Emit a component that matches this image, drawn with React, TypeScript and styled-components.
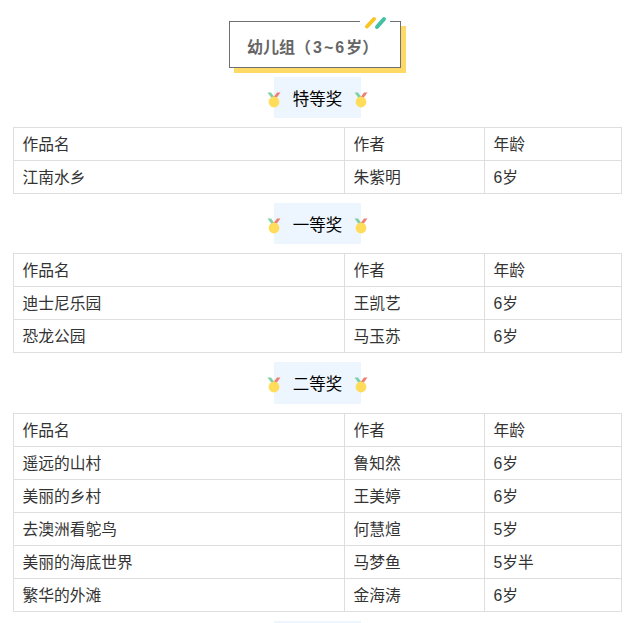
import React from 'react';
import styled, { createGlobalStyle } from 'styled-components';

const GlobalStyle = createGlobalStyle`
  html, body {
    margin: 0;
    padding: 0;
    height: 623px;
    overflow: hidden;
    background: #fff;
    font-family: "Liberation Sans", "Noto Sans CJK SC", sans-serif;
  }
`;

const Page = styled.div`
  width: 630px;
  height: 623px;
  overflow: hidden;
  padding: 21px 8px 0 13px;
  box-sizing: border-box;
  display: flex;
  flex-direction: column;
  align-items: center;
`;

const TitleBox = styled.div`
  position: relative;
  flex: none;
  width: 172px;
  height: 47px;
  box-sizing: border-box;
  border: 1px solid #707070;
  background: #fff;
  box-shadow: 5px 5px 0 #ffd966;
  margin: 0 5px 9px 0;
  padding: 15px 0 0 17px;
  font-size: 16px;
  line-height: 22px;
  font-weight: 700;
  color: #666;
  white-space: nowrap;
`;

const TitleNumber = styled.span`
  margin-left: 2px;
  letter-spacing: 2px;
`;

const TitleMark = styled.svg`
  position: absolute;
  top: -8px;
  right: 10px;
  width: 30px;
  height: 16px;
`;

const Ribbon = styled.div`
  position: relative;
  flex: none;
  width: 87px;
  height: 41.2px;
  margin-bottom: 9px;
  background: #edf6fe;
  display: flex;
  align-items: center;
  justify-content: center;
  font-size: 16.5px;
  color: #000;
`;

const MedalIcon = styled.svg<{ $side: 'left' | 'right' }>`
  position: absolute;
  top: 15px;
  ${p => (p.$side === 'left' ? 'left: -7px;' : 'right: -7px;')}
  width: 14px;
  height: 16px;
`;

const AwardTable = styled.table`
  flex: none;
  width: 608px;
  border-collapse: collapse;
  table-layout: fixed;
  margin-bottom: 9px;
  align-self: flex-start;
  font-size: 15.75px;
  color: #333;
`;

const Cell = styled.td`
  height: 33px;
  padding: 2px 8px 0 8.5px;
  box-sizing: border-box;
  border: 1px solid #dedede;
  line-height: 22px;
`;

type Row = [string, string, string];

const header: Row = ['作品名', '作者', '年龄'];

const sections: { name: string; rows: Row[] }[] = [
  { name: '特等奖', rows: [['江南水乡', '朱紫明', '6岁']] },
  {
    name: '一等奖',
    rows: [
      ['迪士尼乐园', '王凯艺', '6岁'],
      ['恐龙公园', '马玉苏', '6岁'],
    ],
  },
  {
    name: '二等奖',
    rows: [
      ['遥远的山村', '鲁知然', '6岁'],
      ['美丽的乡村', '王美婷', '6岁'],
      ['去澳洲看鸵鸟', '何慧煊', '5岁'],
      ['美丽的海底世界', '马梦鱼', '5岁半'],
      ['繁华的外滩', '金海涛', '6岁'],
    ],
  },
];

const Medal = ({ side }: { side: 'left' | 'right' }) => (
  <MedalIcon $side={side} viewBox="0 0 14 16">
    <path d="M0.5 0.5 L4 0.5 L8.5 6.5 L6 8 Z" fill="#7fd0a8" />
    <path d="M13.5 0.5 L10 0.5 L5.5 6.5 L8 8 Z" fill="#ef7f73" />
    <circle cx="7" cy="10" r="5.4" fill="#ffdc5a" />
  </MedalIcon>
);

const Section = ({ name, rows }: { name: string; rows: Row[] }) => (
  <>
    <Ribbon>
      <Medal side="left" />
      {name}
      <Medal side="right" />
    </Ribbon>
    <AwardTable>
      <colgroup>
        <col style={{ width: 331 }} />
        <col style={{ width: 140 }} />
        <col style={{ width: 137 }} />
      </colgroup>
      <tbody>
        {[header, ...rows].map(row => (
          <tr key={row[0]}>
            {row.map(text => (
              <Cell key={text}>{text}</Cell>
            ))}
          </tr>
        ))}
      </tbody>
    </AwardTable>
  </>
);

export default function App() {
  return (
    <Page>
      <GlobalStyle />
      <TitleBox>
        幼儿组（<TitleNumber>3~6</TitleNumber>岁）
        <TitleMark viewBox="0 0 30 16">
          <rect width="30" height="4" y="6" fill="#fff" />
          <path d="M7 12.5 L14 5" stroke="#f9c623" strokeWidth="4" strokeLinecap="round" />
          <path d="M17 13 L24 5" stroke="#45c0a5" strokeWidth="4" strokeLinecap="round" />
        </TitleMark>
      </TitleBox>
      {sections.map(s => (
        <Section key={s.name} name={s.name} rows={s.rows} />
      ))}
      <Ribbon />
    </Page>
  );
}
